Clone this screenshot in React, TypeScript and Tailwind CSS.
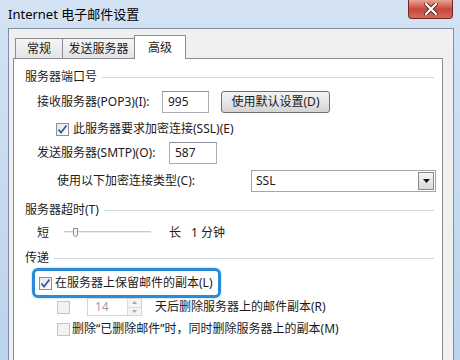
import React from 'react';

const font = { fontFamily: '"Noto Sans", "Noto Sans CJK SC", sans-serif' };

function GroupHeader({ title }: { title: string }) {
  return (
    <div className="flex h-[14px] items-center pl-[11px] pr-[8px]">
      <span className="leading-[14px]">{title}</span>
      <div className="ml-[5px] h-px flex-1 bg-[#d2d8dd]" />
    </div>
  );
}

function CheckBox({ checked, disabled }: { checked?: boolean; disabled?: boolean }) {
  return (
    <span
      className={
        'flex h-[13px] w-[13px] shrink-0 items-center justify-center border ' +
        (disabled ? 'border-[#c4c4c4] bg-[#f2f2f2]' : 'border-[#8f8f8f] bg-gradient-to-br from-[#e6e6e6] to-white')
      }
    >
      {checked && (
        <svg width="11" height="11" viewBox="0 0 11 11">
          <path d="M1.5 5.5 L4 8.5 L9.5 1.5" fill="none" stroke="#3658a8" strokeWidth="1.8" />
        </svg>
      )}
    </span>
  );
}

function TextBox({ value, className }: { value: string; className: string }) {
  return (
    <div className={'flex h-[22px] items-center border border-[#abadb3] border-t-[#8c9099] bg-white pl-[5px] ' + className}>
      {value}
    </div>
  );
}

// 高级选项卡：端口、超时与传递设置
export default function App() {
  return (
    <div
      className="relative h-[360px] w-[460px] overflow-hidden bg-gradient-to-b from-[#d3e3f4] to-[#bcd3ec] text-[12px] text-[#1b1b1b]"
      style={font}
    >
      <div className="flex h-[28px] items-center pl-[8px] text-[13px] leading-none text-black">
        Internet 电子邮件设置
      </div>

      <div className="absolute right-[7px] top-0 flex h-[19px] w-[45px] items-center justify-center rounded-b-[4px] border border-t-0 border-[#6b2a26] bg-gradient-to-b from-[#e8a294] via-[#c8473a] to-[#d76a56]">
        <svg width="14" height="12" viewBox="0 0 14 12">
          <path d="M2 1 L12 11 M12 1 L2 11" stroke="#5a2b28" strokeWidth="4" strokeLinecap="round" />
          <path d="M2 1 L12 11 M12 1 L2 11" stroke="#ffffff" strokeWidth="2.2" strokeLinecap="round" />
        </svg>
      </div>

      <div className="ml-[8px] h-[332px] w-[446px] border-l border-r border-t border-[#7f8ea3] bg-[#f0f0f0] pl-[4px] pt-[6px]">
        <div className="flex h-[23px] items-end pl-[2px]">
          <div className="flex h-[20px] w-[48px] items-center justify-center border border-b-0 border-[#898c95] bg-gradient-to-b from-[#f5f5f5] to-[#e4e4e4]">
            常规
          </div>
          <div className="flex h-[20px] w-[72px] items-center justify-center border border-b-0 border-l-0 border-[#898c95] bg-gradient-to-b from-[#f5f5f5] to-[#e4e4e4]">
            发送服务器
          </div>
          <div className="relative z-10 -mb-px -ml-px flex h-[24px] w-[52px] items-start justify-center border border-b-0 border-[#898c95] bg-white pt-[3px]">
            高级
          </div>
        </div>

        <div className="h-[320px] w-[430px] border border-[#898c95] bg-white pt-[11px]">
          <GroupHeader title="服务器端口号" />

          <div className="mt-[7px] flex h-[22px] items-center pl-[23px]">
            <span className="w-[125px]">接收服务器(POP3)(I):</span>
            <TextBox value="995" className="w-[47px]" />
            <div className="ml-[12px] flex h-[22px] w-[109px] items-center justify-center rounded-[3px] border border-[#707070] bg-gradient-to-b from-[#f3f3f3] via-[#e6e6e6] to-[#d4d4d4]">
              使用默认设置(D)
            </div>
          </div>

          <div className="mt-[9px] flex h-[14px] items-center gap-[4px] pl-[42px]">
            <CheckBox checked />
            <span>此服务器要求加密连接(SSL)(E)</span>
          </div>

          <div className="mt-[6px] flex h-[22px] items-center pl-[23px]">
            <span className="w-[132px]">发送服务器(SMTP)(O):</span>
            <TextBox value="587" className="w-[48px]" />
          </div>

          <div className="mt-[6px] flex h-[22px] items-center pl-[43px]">
            <span className="w-[194px]">使用以下加密连接类型(C):</span>
            <div className="flex h-[22px] w-[185px] items-center justify-between border border-[#a5a5a5] bg-white pl-[4px] pr-[1px]">
              <span>SSL</span>
              <span className="flex h-[18px] w-[16px] items-center justify-center border border-[#8a8a8a] bg-gradient-to-b from-[#f6f6f6] to-[#d9d9d9]">
                <svg width="7" height="4" viewBox="0 0 7 4">
                  <path d="M0 0 H7 L3.5 4 Z" fill="#111" />
                </svg>
              </span>
            </div>
          </div>

          <div className="mt-[11px]">
            <GroupHeader title="服务器超时(T)" />
          </div>

          <div className="mt-[8px] flex h-[16px] items-center pl-[23px]">
            <span className="w-[27px]">短</span>
            <svg width="88" height="12" viewBox="0 0 88 12">
              <line x1="0" y1="4.5" x2="87" y2="4.5" stroke="#c9c9c9" strokeWidth="1" />
              <line x1="0" y1="5.5" x2="87" y2="5.5" stroke="#ececec" strokeWidth="1" />
              <path d="M9.5 1.5 H13.5 V8 L11.5 10 L9.5 8 Z" fill="#f4f4f4" stroke="#8a8a8a" />
            </svg>
            <span className="ml-[17px]">长</span>
            <span className="ml-[10px]">1 分钟</span>
          </div>

          <div className="mt-[10px]">
            <GroupHeader title="传递" />
          </div>

          <div className="ml-[18px] mt-[3px] flex h-[30px] w-[189px] items-center gap-[3px] rounded-[6px] border-[3px] border-[#2b8bd6] pl-[4px] shadow-[0_0_2px_#7fb8e6]">
            <CheckBox checked />
            <span>在服务器上保留邮件的副本(L)</span>
          </div>

          <div className="flex h-[18px] items-center pl-[43px]">
            <CheckBox disabled />
            <div className="ml-[17px] flex h-[18px] w-[55px] border border-[#d5d5d5] bg-white">
              <span className="flex flex-1 items-center pl-[7px] text-[#a0a0a0]">14</span>
              <span className="flex w-[14px] flex-col border-l border-[#dcdcdc]">
                <span className="flex flex-1 items-center justify-center border-b border-[#dcdcdc] bg-[#f4f4f4]">
                  <svg width="5" height="3" viewBox="0 0 5 3">
                    <path d="M0 3 L2.5 0 L5 3 Z" fill="#a8a8a8" />
                  </svg>
                </span>
                <span className="flex flex-1 items-center justify-center bg-[#f4f4f4]">
                  <svg width="5" height="3" viewBox="0 0 5 3">
                    <path d="M0 0 H5 L2.5 3 Z" fill="#a8a8a8" />
                  </svg>
                </span>
              </span>
            </div>
            <span className="ml-[13px]">天后删除服务器上的邮件副本(R)</span>
          </div>

          <div className="mt-[6px] flex h-[14px] items-center gap-[2px] pl-[43px]">
            <CheckBox disabled />
            <span>删除“已删除邮件”时，同时删除服务器上的副本(M)</span>
          </div>
        </div>
      </div>
    </div>
  );
}
